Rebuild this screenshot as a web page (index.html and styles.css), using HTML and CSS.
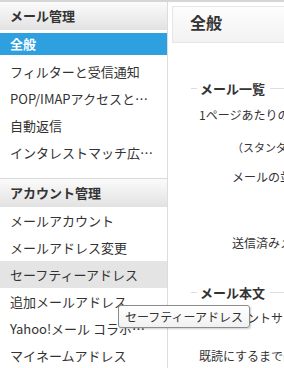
FILE: index.html
```html
<!DOCTYPE html>
<html lang="ja">
<head>
    <meta charset="UTF-8">
    <meta name="viewport" content="width=device-width, initial-scale=1.0">
    <title>メール設定 - 全般</title>
    <link rel="stylesheet" href="styles.css">
</head>
<body>
    <div class="page">
        <nav class="side">
            <h2 class="side-head">メール管理</h2>
            <ul class="menu">
                <li class="on"><a href="#">全般</a></li>
                <li><a href="#">フィルターと受信通知</a></li>
                <li><a href="#">POP/IMAPアクセスとメール転送</a></li>
                <li><a href="#">自動返信</a></li>
                <li><a href="#">インタレストマッチ広告の表示</a></li>
            </ul>
            <h2 class="side-head sep">アカウント管理</h2>
            <ul class="menu">
                <li><a href="#">メールアカウント</a></li>
                <li><a href="#">メールアドレス変更</a></li>
                <li class="hover"><a href="#">セーフティーアドレス</a></li>
                <li><a href="#">追加メールアドレス</a></li>
                <li><a href="#">Yahoo!メール コラボレーション</a></li>
                <li><a href="#">マイネームアドレス</a></li>
            </ul>
        </nav>

        <main class="content">
            <div class="title"><h1>全般</h1></div>

            <div class="group-head">メール一覧</div>
            <p class="field first">1ページあたりの表示件数</p>
            <p class="field opt note">（スタンダード表示）</p>
            <p class="field opt sort">メールの並び順</p>
            <p class="field opt sent">送信済みメールの保存</p>

            <div class="group-head second">メール本文</div>
            <p class="field size">表示フォントサイズ</p>
            <p class="field read">既読にするまでの時間</p>
        </main>

        <div class="tip">セーフティーアドレス</div>
    </div>
</body>
</html>
```

FILE: styles.css
```css
body{
    margin: 0;
    border-top: 2px solid #d6d6d6;
    background: #fff;
    color: #333;
    font-family: "Noto Sans CJK JP", "Noto Sans", sans-serif;
}
.page{
    position: relative;
    display: flex;
    height: 366px;
    overflow: hidden;
}
.side{
    flex: none;
    width: 167px;
    border-right: 1px solid #dcdcdc;
}
.side-head{
    margin: 0;
    height: 28px;
    padding-left: 10px;
    line-height: 28px;
    font-size: 13px;
    font-weight: bold;
    background: linear-gradient(#fbfbfb, #e2e2e2);
}
.side-head.sep{
    margin-top: 12px;
    border-top: 1px solid #d9d9d9;
}
.menu{
    list-style: none;
    margin: 0;
    padding: 0;
}
.menu a{
    display: block;
    height: 27px;
    padding: 0 12px 0 10px;
    line-height: 27px;
    font-size: 13px;
    color: #333;
    text-decoration: none;
    white-space: nowrap;
    overflow: hidden;
    text-overflow: ellipsis;
}
.menu .on a{
    height: 22px;
    margin: 3px 0;
    line-height: 22px;
    background: #2ea0df;
    color: #fff;
    font-weight: bold;
}
.menu .hover a{
    background: #e4e4e4;
}
.content{
    flex: 1;
    min-width: 0;
    padding: 4px 0 0 4px;
    overflow: hidden;
    white-space: nowrap;
}
.title{
    height: 35px;
    padding-left: 17px;
    border: 1px solid #e6e6e6;
    border-right: none;
    background: linear-gradient(#fdfdfd, #f2f2f2);
}
.title h1{
    margin: 0;
    font-size: 16px;
    line-height: 31px;
}
.group-head{
    display: flex;
    align-items: center;
    height: 20px;
    margin: 35px 0 0 19px;
    font-size: 13px;
    font-weight: bold;
}
.group-head::before{
    content: "";
    width: 6px;
    margin-right: 3px;
    border-top: 1px solid #dddddd;
}
.group-head::after{
    content: "";
    flex: 1;
    margin-left: 5px;
    border-top: 1px solid #dddddd;
}
.group-head.second{
    margin-top: 30px;
}
.field{
    margin: 0;
    padding-left: 27px;
    font-size: 12px;
    line-height: 18px;
}
.field.opt{
    padding-left: 60px;
}
.first{ margin-top: 8px; }
.note{
    margin-top: 15px;
    font-size: 11px;
    line-height: 16px;
}
.sort{ margin-top: 13px; }
.sent{ margin-top: 48px; }
.size{ margin-top: 7px; }
.read{ margin-top: 20px; }
.tip{
    position: absolute;
    left: 118px;
    top: 303px;
    width: 124px;
    height: 21px;
    padding-left: 6px;
    border: 1px solid #8c8c8c;
    border-radius: 3px;
    background: linear-gradient(#fff, #f1f1f1);
    box-shadow: 1px 1px 2px rgba(0, 0, 0, .2);
    font-size: 12px;
    line-height: 21px;
    white-space: nowrap;
}
```
